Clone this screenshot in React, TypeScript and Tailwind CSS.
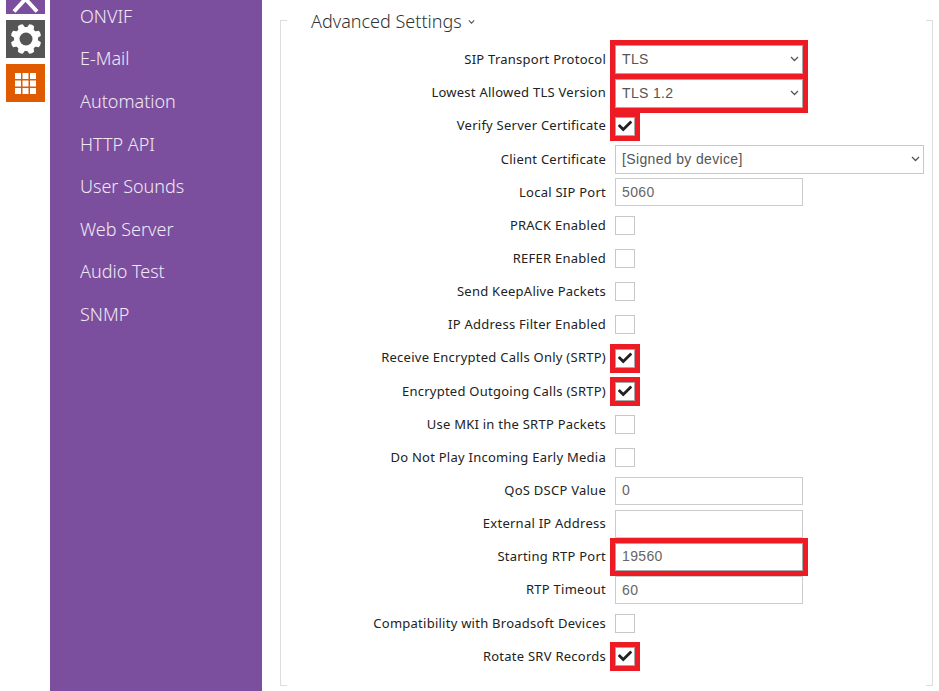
import { FaCheck } from "react-icons/fa";

type Row = { label: string; kind: "select" | "wide" | "check" | "input"; value?: string; checked?: boolean; red?: boolean };

const rows: Row[] = [
  { label: "SIP Transport Protocol", kind: "select", value: "TLS", red: true },
  { label: "Lowest Allowed TLS Version", kind: "select", value: "TLS 1.2", red: true },
  { label: "Verify Server Certificate", kind: "check", checked: true, red: true },
  { label: "Client Certificate", kind: "wide", value: "[Signed by device]" },
  { label: "Local SIP Port", kind: "input", value: "5060" },
  { label: "PRACK Enabled", kind: "check" },
  { label: "REFER Enabled", kind: "check" },
  { label: "Send KeepAlive Packets", kind: "check" },
  { label: "IP Address Filter Enabled", kind: "check" },
  { label: "Receive Encrypted Calls Only (SRTP)", kind: "check", checked: true, red: true },
  { label: "Encrypted Outgoing Calls (SRTP)", kind: "check", checked: true, red: true },
  { label: "Use MKI in the SRTP Packets", kind: "check" },
  { label: "Do Not Play Incoming Early Media", kind: "check" },
  { label: "QoS DSCP Value", kind: "input", value: "0" },
  { label: "External IP Address", kind: "input", value: "" },
  { label: "Starting RTP Port", kind: "input", value: "19560", red: true },
  { label: "RTP Timeout", kind: "input", value: "60" },
  { label: "Compatibility with Broadsoft Devices", kind: "check" },
  { label: "Rotate SRV Records", kind: "check", checked: true, red: true },
];

const nav = ["ONVIF", "E-Mail", "Automation", "HTTP API", "User Sounds", "Web Server", "Audio Test", "SNMP"];

const teeth = [0, 45, 90, 135, 180, 225, 270, 315];

function Chevron({ className }: { className: string }) {
  return (
    <svg className={className} width="9" height="6" viewBox="0 0 9 6" fill="none" stroke="#555" strokeWidth="1.3">
      <path d="M1 1l3.5 3.5L8 1" />
    </svg>
  );
}

function Gear() {
  return (
    <svg width="32" height="32" viewBox="-16 -16 32 32">
      <circle r="12" fill="#fff" />
      {teeth.map((a) => (
        <path key={a} d="M-3.6 -11 L-2.6 -15 Q0 -16 2.6 -15 L3.6 -11 Z" fill="#fff" transform={`rotate(${a + 22.5})`} />
      ))}
      <circle r="6.5" fill="#555555" />
    </svg>
  );
}

function Control({ row }: { row: Row }) {
  const red = row.red ? "outline-[5px] outline-solid outline-[#ed1c24]" : "";
  if (row.kind === "check") {
    return (
      <div className={`flex h-[19px] w-[20px] items-center justify-center border bg-white text-[#222] ${row.checked ? "border-[#a8a8a8]" : "border-[#c8c8c8]"} ${red}`}>
        {row.checked && <FaCheck className="text-[14px]" />}
      </div>
    );
  }
  if (row.kind === "input") {
    return (
      <div className={`flex h-[28px] w-[188px] items-center border bg-white pl-[6px] font-['Liberation_Sans',sans-serif] text-[14px] tracking-[0.35px] text-[#666] ${row.red ? "border-[#a8a8a8]" : "border-[#cccccc]"} ${red}`}>
        {row.value}
      </div>
    );
  }
  return (
    <div className={`relative flex h-[29px] items-center border bg-white pl-[6px] font-['Liberation_Sans',sans-serif] text-[14px] tracking-[0.35px] text-[#555] ${row.kind === "wide" ? "w-[309px] border-[#c8c8c8]" : "w-[188px] border-[#a8a8a8]"} ${red}`}>
      {row.value}
      <Chevron className="absolute right-[3px] top-[10px]" />
    </div>
  );
}

export default function App() {
  return (
    <div className="flex h-[691px] w-[939px] overflow-hidden bg-white font-['Noto_Sans',sans-serif]">
      <div className="flex w-[50px] shrink-0 flex-col gap-[6px] pl-[6px]">
        <div className="h-[14px] w-[39px] overflow-hidden bg-[#7b4f9d]">
          <svg width="39" height="14" viewBox="0 0 39 14" fill="none" stroke="#fff" strokeWidth="4">
            <path d="M8 11.5L19.5 -1L31 11.5" />
          </svg>
        </div>
        <div className="flex h-[38px] w-[39px] items-center justify-center bg-[#555555]">
          <Gear />
        </div>
        <div className="flex h-[38px] w-[39px] items-center justify-center bg-[#e05a00]">
          <svg width="21" height="21" viewBox="0 0 21 21" fill="#fff">
            <rect x="0" y="0" width="6" height="6" /><rect x="7.5" y="0" width="6" height="6" /><rect x="15" y="0" width="6" height="6" />
            <rect x="0" y="7.5" width="6" height="6" /><rect x="7.5" y="7.5" width="6" height="6" /><rect x="15" y="7.5" width="6" height="6" />
            <rect x="0" y="15" width="6" height="6" /><rect x="7.5" y="15" width="6" height="6" /><rect x="15" y="15" width="6" height="6" />
          </svg>
        </div>
      </div>

      <div className="flex w-[212px] shrink-0 flex-col bg-[#7b4f9d] pl-[30px] text-[18px] font-light text-[#f0e9f5]">
        {nav.map((n) => (
          <div key={n} className="flex h-[42.6px] items-center first:-mt-[5px]">{n}</div>
        ))}
      </div>

      <div className="relative ml-[18px] mt-[20px] h-[666px] w-[653px] border-x border-[#dddddd]">
        <span className="absolute left-0 top-0 h-px w-[6px] bg-[#dddddd]" />
        <span className="absolute right-0 top-0 h-px w-[6px] bg-[#dddddd]" />
        <span className="absolute bottom-0 left-0 h-px w-[6px] bg-[#dddddd]" />
        <span className="absolute bottom-0 right-0 h-px w-[6px] bg-[#dddddd]" />

        <div className="-mt-[11px] ml-[30px] flex h-[24px] items-center gap-[6px] text-[18px] font-light text-[#333]">
          Advanced Settings
          <Chevron className="mt-[2px] w-[7px]" />
        </div>

        <div className="mt-[10.3px] flex flex-col">
          {rows.map((r) => (
            <div key={r.label} className="flex h-[33.15px] items-center gap-[9px]">
              <div className="w-[325px] shrink-0 text-right text-[13px] tracking-[0.25px] text-[#222]">{r.label}</div>
              <Control row={r} />
            </div>
          ))}
        </div>
      </div>
    </div>
  );
}
